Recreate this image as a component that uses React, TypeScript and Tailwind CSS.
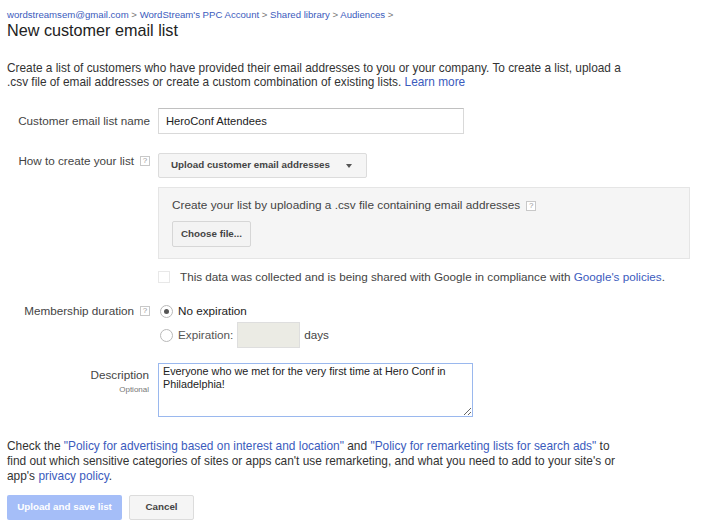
import { useState } from "react"

function Help() {
    return (
        <span className="inline-flex items-center justify-center w-[10px] h-[10px] border border-[#c8c8c8] text-[8px] leading-none text-[#999] bg-white ml-[6px]">
            ?
        </span>
    )
}

function Radio({ checked }: { checked?: boolean }) {
    return (
        <span className="inline-flex items-center justify-center w-[13px] h-[13px] rounded-full border border-[#b9b9b9] bg-white">
            {checked && <span className="w-[5px] h-[5px] rounded-full bg-[#555]" />}
        </span>
    )
}

export default function App() {
    const [desc, setDesc] = useState("Everyone who we met for the very first time at Hero Conf in Philadelphia!")

    return (
        <div className="w-[704px] h-[530px] bg-white text-[#222] font-['Liberation_Sans',Arial,sans-serif] overflow-hidden">
            <div className="px-[7px] pt-[9px]">
                <div className="text-[9.6px] leading-[12px] text-[#777]">
                    <a className="text-[#3b5bbd]">wordstreamsem@gmail.com</a> &gt;{" "}
                    <a className="text-[#3b5bbd]">WordStream's PPC Account</a> &gt;{" "}
                    <a className="text-[#3b5bbd]">Shared library</a> &gt;{" "}
                    <a className="text-[#3b5bbd]">Audiences</a> &gt;
                </div>
                <h1 className="text-[16.2px] leading-[18px] text-[#222]">New customer email list</h1>

                <p className="mt-[22px] text-[11.85px] leading-[14px] text-[#333] w-[630px]">
                    Create a list of customers who have provided their email addresses to you or your company. To create a list, upload a .csv file of email addresses or create a custom combination of existing lists.{" "}
                    <a className="text-[#3b5bbd]">Learn more</a>
                </p>
            </div>

            <div className="mt-[19px] flex flex-col">
                {/* list name */}
                <div className="flex items-center">
                    <div className="w-[150px] text-right text-[11.7px] text-[#444]">Customer email list name</div>
                    <input
                        className="ml-[8px] w-[306px] h-[26px] border border-[#d9d9d9] border-t-[#c0c0c0] px-[7px] text-[11.2px] text-[#222] outline-none"
                        defaultValue="HeroConf Attendees"
                    />
                </div>

                {/* how to create */}
                <div className="flex mt-[19px]">
                    <div className="w-[150px] flex justify-end items-center h-[14px] mt-[1px]">
                        <span className="text-[11.7px] leading-[14px] text-[#444]">How to create your list</span>
                        <Help />
                    </div>
                    <div className="ml-[8px] flex flex-col">
                        <button className="w-[209px] h-[25px] flex items-center justify-between px-[12px] border border-[#dcdcdc] rounded-[2px] bg-[#f5f5f5] text-[9.8px] font-bold text-[#444]">
                            <span>Upload customer email addresses</span>
                            <span className="w-0 h-0 border-l-[3px] border-r-[3px] border-t-[4px] border-l-transparent border-r-transparent border-t-[#555] mr-[2px]" />
                        </button>
                        <div className="mt-[9px] w-[532px] h-[72px] border border-[#e5e5e5] bg-[#f5f5f5] px-[13px] pt-[11px]">
                            <div className="flex items-center h-[14px] text-[11.8px] text-[#444]">
                                <span>Create your list by uploading a .csv file containing email addresses</span>
                                <Help />
                            </div>
                            <button className="mt-[8px] w-[79px] h-[26px] border border-[#d6d6d6] rounded-[2px] bg-[#f3f3f3] text-[9.8px] font-bold text-[#444]">
                                Choose file...
                            </button>
                        </div>
                        <div className="mt-[11px] h-[14px] flex items-center">
                            <span className="w-[12px] h-[12px] border border-[#e8e8e8] bg-white" />
                            <span className="ml-[10px] text-[11.7px] leading-[14px] text-[#444]">
                                This data was collected and is being shared with Google in compliance with{" "}
                                <a className="text-[#3b5bbd]">Google's policies</a>.
                            </span>
                        </div>
                    </div>
                </div>

                {/* membership */}
                <div className="flex mt-[20px]">
                    <div className="w-[150px] flex justify-end items-center h-[14px]">
                        <span className="text-[11.7px] leading-[14px] text-[#444]">Membership duration</span>
                        <Help />
                    </div>
                    <div className="ml-[8px] flex flex-col">
                        <div className="flex items-center h-[14px]">
                            <span className="ml-[2px] flex"><Radio checked /></span>
                            <span className="ml-[5px] text-[11.7px] leading-[14px] text-[#222]">No expiration</span>
                        </div>
                        <div className="flex items-center mt-[4px]">
                            <span className="ml-[2px] flex"><Radio /></span>
                            <span className="ml-[5px] text-[11.7px] text-[#555]">Expiration:</span>
                            <input
                                disabled
                                className="ml-[4px] w-[63px] h-[26px] border border-[#dedede] bg-[#ebebe4] outline-none"
                            />
                            <span className="ml-[4px] text-[11.7px] text-[#444]">days</span>
                        </div>
                    </div>
                </div>

                {/* description */}
                <div className="flex mt-[15px]">
                    <div className="w-[149px] flex flex-col items-end pt-[5px]">
                        <span className="text-[11.7px] leading-[14px] text-[#444]">Description</span>
                        <span className="text-[8px] leading-[10px] mt-[3px] text-[#777]">Optional</span>
                    </div>
                    <textarea
                        className="ml-[9px] w-[315px] h-[54px] border border-[#9ab8ee] px-[4px] py-[1px] text-[10.8px] leading-[13px] text-[#222] outline-none resize-y"
                        value={desc}
                        onChange={(e) => setDesc(e.target.value)}
                    />
                </div>
            </div>

            <p className="mt-[22px] px-[7px] text-[11.9px] leading-[15px] text-[#333] w-[634px]">
                Check the <a className="text-[#3b5bbd]">"Policy for advertising based on interest and location"</a> and{" "}
                <a className="text-[#3b5bbd]">"Policy for remarketing lists for search ads"</a> to find out which sensitive categories of sites or apps can't use remarketing, and what you need to add to your site's or app's{" "}
                <a className="text-[#3b5bbd]">privacy policy</a>.
            </p>

            <div className="mt-[11px] px-[7px] flex gap-[7px]">
                <button className="w-[115px] h-[25px] rounded-[2px] bg-[#a5bef8] text-white text-[9.8px] font-bold">
                    Upload and save list
                </button>
                <button className="w-[65px] h-[25px] rounded-[2px] border border-[#dcdcdc] bg-[#f5f5f5] text-[#444] text-[9.8px] font-bold">
                    Cancel
                </button>
            </div>
        </div>
    )
}
